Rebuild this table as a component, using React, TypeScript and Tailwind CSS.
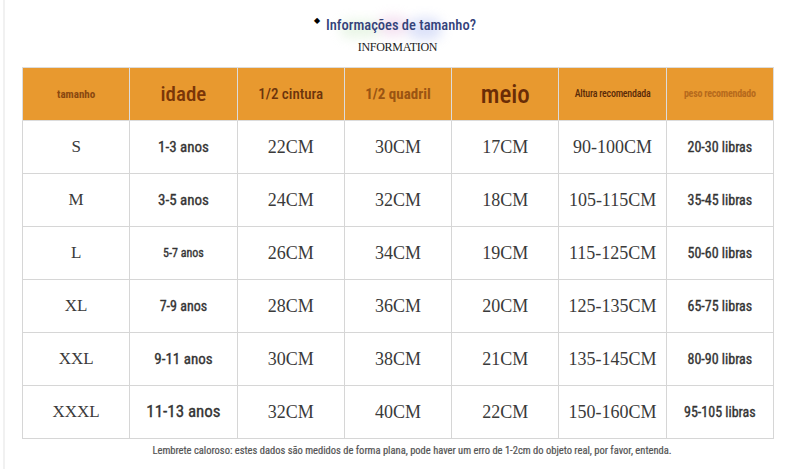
const cond = "font-['Roboto_Condensed','Liberation_Sans_Narrow','DejaVu_Sans_Condensed',sans-serif]";
const serif = "font-['Liberation_Serif','Times_New_Roman',serif]";
const thick = "[-webkit-text-stroke:0.35px_currentColor]";

type Head = { label: string; cls: string };

const heads: Head[] = [
  { label: "tamanho", cls: "text-[11px] text-[#8a4810]" },
  { label: "idade", cls: "text-[21px] text-[#7a3608] font-medium" },
  { label: "1/2 cintura", cls: "text-[15px] text-[#6b340c] font-medium" },
  { label: "1/2 quadril", cls: "text-[15px] text-[#9a5412]" },
  { label: "meio", cls: "text-[25px] text-[#6a2c06] font-medium" },
  { label: "Altura recomendada", cls: "text-[10px] text-[#5a2a08] font-medium tracking-tight" },
  { label: "peso recomendado", cls: "text-[10px] text-[#b66a1c] tracking-tight" },
];

const rows = [
  { size: "S", age: "1-3 anos", ageCls: "text-[15px]", w: "22CM", h: "30CM", m: "17CM", ht: "90-100CM", kg: "20-30 libras" },
  { size: "M", age: "3-5 anos", ageCls: "text-[15px]", w: "24CM", h: "32CM", m: "18CM", ht: "105-115CM", kg: "35-45 libras" },
  { size: "L", age: "5-7 anos", ageCls: "text-[12px]", w: "26CM", h: "34CM", m: "19CM", ht: "115-125CM", kg: "50-60 libras" },
  { size: "XL", age: "7-9 anos", ageCls: "text-[14px]", w: "28CM", h: "36CM", m: "20CM", ht: "125-135CM", kg: "65-75 libras" },
  { size: "XXL", age: "9-11 anos", ageCls: "text-[15px]", w: "30CM", h: "38CM", m: "21CM", ht: "135-145CM", kg: "80-90 libras" },
  { size: "XXXL", age: "11-13 anos", ageCls: "text-[17px]", w: "32CM", h: "40CM", m: "22CM", ht: "150-160CM", kg: "95-105 libras" },
];

const val = `${serif} border border-[#d6d6d6] text-center text-[18px] text-[#3a3a3a]`;

export default function App() {
  return (
    <div className="relative w-[791px] h-[469px] bg-white overflow-hidden">
      <div className="absolute left-[3px] top-0 h-full w-[2px] bg-[#f1f1f1]" />

      <div className="relative h-[67px] flex flex-col items-center">
        <div className="absolute left-[330px] top-[10px] w-[130px] h-[40px] opacity-40 blur-[6px]">
          <div className="absolute left-[10px] top-[10px] w-[40px] h-[18px] rounded-full bg-[#c9e8c2]" />
          <div className="absolute left-[48px] top-[6px] w-[30px] h-[20px] rounded-full bg-[#e4b6dc]" />
          <div className="absolute left-[78px] top-[8px] w-[34px] h-[22px] rounded-full bg-[#a9b7f0]" />
        </div>
        <div className="relative mt-[15px] ml-[-1px] flex items-start gap-[6px]">
          <span className="text-[8px] leading-none mt-[1px] text-black">◆</span>
          <span className={`${cond} text-[14.5px] leading-[22px] font-medium text-[#34427a]`}>
            Informações de tamanho?
          </span>
        </div>
        <div className={`${serif} relative text-[12px] leading-none mt-[4px] ml-[4px] text-[#222] tracking-tight`}>
          INFORMATION
        </div>
      </div>

      <table className="ml-[22px] w-[752px] table-fixed border-collapse">
        <thead>
          <tr className="h-[53px] bg-[#e8992f]">
            {heads.map((h) => (
              <th key={h.label} className={`${cond} ${h.cls} border border-[#dcdcdc] text-center align-middle leading-none`}>
                {h.label}
              </th>
            ))}
          </tr>
        </thead>
        <tbody>
          {rows.map((r) => (
            <tr key={r.size} className="h-[53px]">
              <td className={`${serif} border border-[#d6d6d6] text-center text-[17px] text-[#3a3a3a]`}>{r.size}</td>
              <td className={`${cond} ${thick} ${r.ageCls} border border-[#d6d6d6] text-center font-normal text-[#333]`}>{r.age}</td>
              <td className={val}>{r.w}</td>
              <td className={val}>{r.h}</td>
              <td className={val}>{r.m}</td>
              <td className={val}>{r.ht}</td>
              <td className={`${cond} ${thick} border border-[#d6d6d6] text-center text-[14px] font-normal text-[#333]`}>{r.kg}</td>
            </tr>
          ))}
        </tbody>
      </table>

      <p className={`${cond} [-webkit-text-stroke:0.2px_currentColor] mt-[4px] ml-[22px] w-[780px] text-center text-[10.5px] text-[#555]`}>
        Lembrete caloroso: estes dados são medidos de forma plana, pode haver um erro de 1-2cm do objeto real, por favor, entenda.
      </p>
    </div>
  );
}
